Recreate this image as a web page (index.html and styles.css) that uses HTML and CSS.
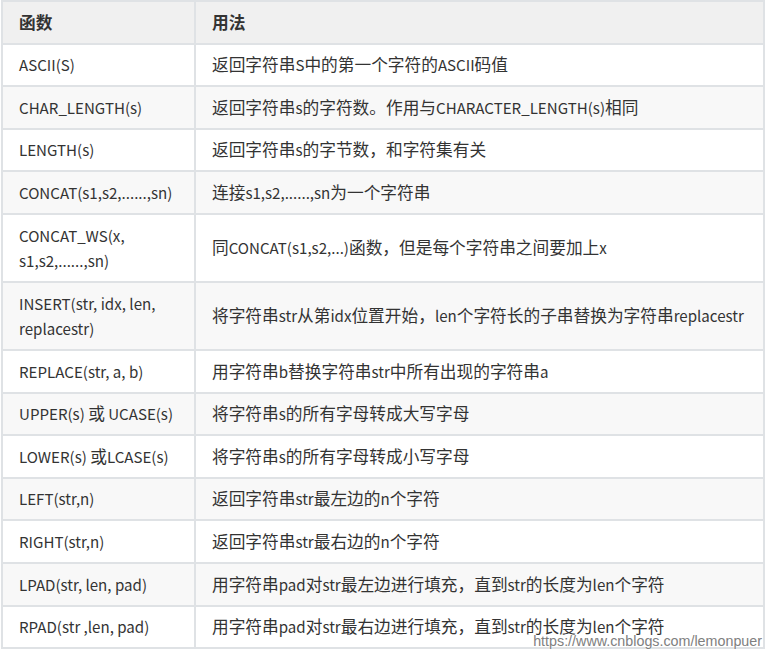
FILE: index.html
```html
<!DOCTYPE html>
<html lang="zh">
<head>
<meta charset="utf-8">
<link rel="stylesheet" href="styles.css">
</head>
<body>
<div class="wrap">
<table class="fn-table">
<colgroup><col class="c1"><col class="c2"></colgroup>
<thead>
<tr><th>函数</th><th>用法</th></tr>
</thead>
<tbody>
<tr><td class="fn">ASCII(S)</td><td>返回字符串<span class="en">S</span>中的第一个字符的<span class="en">ASCII</span>码值</td></tr>
<tr><td class="fn">CHAR_LENGTH(s)</td><td>返回字符串<span class="en">s</span>的字符数。作用与<span class="en">CHARACTER_LENGTH(s)</span>相同</td></tr>
<tr><td class="fn">LENGTH(s)</td><td>返回字符串<span class="en">s</span>的字节数，和字符集有关</td></tr>
<tr><td class="fn">CONCAT(s1,s2,......,sn)</td><td>连接<span class="en">s1,s2,......,sn</span>为一个字符串</td></tr>
<tr><td class="fn">CONCAT_WS(x,<br>s1,s2,......,sn)</td><td>同<span class="en">CONCAT(s1,s2,...)</span>函数，但是每个字符串之间要加上<span class="en">x</span></td></tr>
<tr><td class="fn">INSERT(str, idx, len,<br>replacestr)</td><td>将字符串<span class="en">str</span>从第<span class="en">idx</span>位置开始，<span class="en">len</span>个字符长的子串替换为字符串<span class="en">replacestr</span></td></tr>
<tr><td class="fn">REPLACE(str, a, b)</td><td>用字符串<span class="en">b</span>替换字符串<span class="en">str</span>中所有出现的字符串<span class="en">a</span></td></tr>
<tr><td class="fn">UPPER(s) <span class="zh">或</span> UCASE(s)</td><td>将字符串<span class="en">s</span>的所有字母转成大写字母</td></tr>
<tr><td class="fn">LOWER(s) <span class="zh">或</span>LCASE(s)</td><td>将字符串<span class="en">s</span>的所有字母转成小写字母</td></tr>
<tr><td class="fn">LEFT(str,n)</td><td>返回字符串<span class="en">str</span>最左边的<span class="en">n</span>个字符</td></tr>
<tr><td class="fn">RIGHT(str,n)</td><td>返回字符串<span class="en">str</span>最右边的<span class="en">n</span>个字符</td></tr>
<tr><td class="fn">LPAD(str, len, pad)</td><td>用字符串<span class="en">pad</span>对<span class="en">str</span>最左边进行填充，直到<span class="en">str</span>的长度为<span class="en">len</span>个字符</td></tr>
<tr><td class="fn">RPAD(str ,len, pad)</td><td>用字符串<span class="en">pad</span>对<span class="en">str</span>最右边进行填充，直到<span class="en">str</span>的长度为<span class="en">len</span>个字符</td></tr>
</tbody>
</table>
<div class="watermark">https://www.cnblogs.com/lemonpuer</div>
</div>
</body>
</html>
```
FILE: styles.css
```css
html, body {
  margin: 0;
  padding: 0;
  background: #ffffff;
}
.wrap {
  position: relative;
  width: 767px;
  height: 650px;
  overflow: hidden;
}
.fn-table {
  margin-left: 1px;
  width: 764px;
  border-collapse: collapse;
  table-layout: fixed;
  font-family: "Noto Sans CJK SC", "Noto Sans", sans-serif;
  font-size: 16.7px;
  color: #333333;
}
.c1 { width: 193px; }
.fn-table th,
.fn-table td {
  border: 2px solid #dfe2e5;
  padding: 7.6px 16px;
  line-height: 25.4px;
  text-align: left;
  vertical-align: middle;
  white-space: nowrap;
}
.fn-table th {
  font-weight: 700;
  background: #f0f0f0;
}
.fn-table td.fn {
  font-size: 15.1px;
}
.fn-table .zh {
  font-size: 16.7px;
}
.fn-table .en {
  font-size: 15.1px;
}
.fn-table tbody tr:nth-child(even) td {
  background: #f8f8f8;
}
.watermark {
  position: absolute;
  right: 5px;
  bottom: 1px;
  font-family: "Liberation Sans", Arial, sans-serif;
  font-size: 14.3px;
  color: #808080;
  text-shadow: 0 0 2px #ffffff, 0 0 1px #ffffff;
  line-height: 16px;
}
```
